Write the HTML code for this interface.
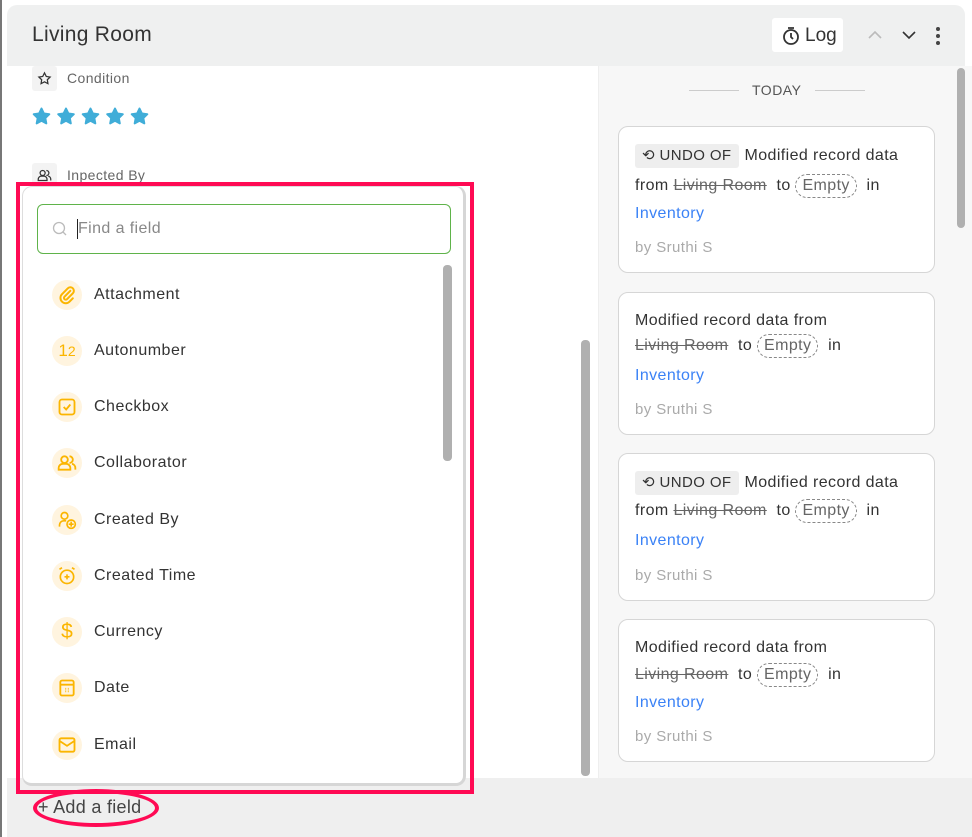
<!DOCTYPE html><html><head><meta charset="utf-8"><style>
*{margin:0;padding:0;box-sizing:border-box}
body{width:972px;height:837px;overflow:hidden;background:#fff;font-family:"Liberation Sans",sans-serif;position:relative;color:#333}
.a{position:absolute}
.t{font-size:16px;white-space:nowrap}
.item{position:absolute;left:52px;height:30px;display:flex;align-items:center}
.ic{width:30px;height:30px;border-radius:50%;background:#fff4df;display:flex;align-items:center;justify-content:center;margin-right:12px}
.item span{font-size:16px;color:#333;letter-spacing:0.5px}
.card{position:absolute;left:618px;width:317px;background:#fff;border:1px solid #d6d6d6;border-radius:10px}
.card .l{position:absolute;left:16px;font-size:16px;color:#333;white-space:nowrap;letter-spacing:0.4px}
s{color:#666;text-decoration:line-through}
.emp{display:inline-block;border:1px dashed #888;border-radius:12px;padding:0 6px;line-height:22px;color:#666}
.undo{display:inline-block;background:#eeeeee;border-radius:3px;padding:0 7px;line-height:24px;font-size:15px;margin-right:6px}
.card .inv{color:#3b82f6}
.card .by{color:#aaa;font-size:15px}
</style></head><body>
<div class="a" style="left:0;top:0;width:2px;height:837px;background:#777"></div>
<!-- header -->
<div class="a" style="left:7px;top:5px;width:958px;height:61px;background:#eff0f0;border-top-left-radius:10px;border-top-right-radius:10px"></div>
<div class="a" style="left:32px;top:23px;font-size:21px;color:#333;letter-spacing:0.3px">Living Room</div>
<div class="a" style="left:772px;top:18px;width:71px;height:34px;background:#fff;border-radius:3px"></div>
<svg class="a" style="left:781px;top:26px" width="20" height="20" viewBox="0 0 20 20" fill="none" stroke="#333" stroke-width="1.8"><circle cx="10" cy="11" r="7"/><path d="M10 7v4l2 2M7 2h6"/></svg>
<div class="a t" style="left:805px;top:25px;font-size:19px">Log</div>
<svg class="a" style="left:867px;top:29px" width="16" height="12"><path d="M2 9l6-6 6 6" fill="none" stroke="#bbb" stroke-width="1.6"/></svg>
<svg class="a" style="left:901px;top:29px" width="16" height="12"><path d="M2 3l6 6 6-6" fill="none" stroke="#333" stroke-width="1.6"/></svg>
<div class="a" style="left:936px;top:27px;width:4px;height:4px;border-radius:2px;background:#444;box-shadow:0 7px 0 #444,0 14px 0 #444"></div>
<!-- right panel -->
<div class="a" style="left:598px;top:66px;width:374px;height:712px;background:#f7f7f7;border-left:1px solid #eee"></div>
<div class="a" style="left:957px;top:68px;width:8px;height:160px;border-radius:4px;background:#b0b0b0"></div>
<div class="a" style="left:689px;top:90px;width:50px;height:1px;background:#ccc"></div>
<div class="a" style="left:815px;top:90px;width:50px;height:1px;background:#ccc"></div>
<div class="a" style="left:752px;top:82px;font-size:14px;color:#555;letter-spacing:0.5px">TODAY</div>

<div class="card" style="top:126px;height:147px">
<div class="l" style="top:17px"><span class="undo">⟲ UNDO OF</span>Modified record data</div>
<div class="l" style="top:47px">from <s>Living Room</s> &nbsp;to <span class="emp">Empty</span> &nbsp;in</div>
<div class="l inv" style="top:78px">Inventory</div>
<div class="l by" style="top:112px">by Sruthi S</div></div>
<div class="card" style="top:292px;height:143px">
<div class="l" style="top:19px">Modified record data from</div>
<div class="l" style="top:41px"><s>Living Room</s> &nbsp;to <span class="emp">Empty</span> &nbsp;in</div>
<div class="l inv" style="top:74px">Inventory</div>
<div class="l by" style="top:108px">by Sruthi S</div></div>
<div class="card" style="top:453px;height:148px">
<div class="l" style="top:17px"><span class="undo">⟲ UNDO OF</span>Modified record data</div>
<div class="l" style="top:45px">from <s>Living Room</s> &nbsp;to <span class="emp">Empty</span> &nbsp;in</div>
<div class="l inv" style="top:78px">Inventory</div>
<div class="l by" style="top:113px">by Sruthi S</div></div>
<div class="card" style="top:619px;height:143px">
<div class="l" style="top:19px">Modified record data from</div>
<div class="l" style="top:43px"><s>Living Room</s> &nbsp;to <span class="emp">Empty</span> &nbsp;in</div>
<div class="l inv" style="top:74px">Inventory</div>
<div class="l by" style="top:108px">by Sruthi S</div></div>

<!-- left content -->
<div class="a" style="left:32px;top:66px;width:25px;height:25px;background:#f3f3f3;border-radius:3px"></div>
<svg class="a" style="left:37px;top:71px" width="15" height="15" viewBox="0 0 24 24"><path d="M12 3l2.8 5.7 6.2.9-4.5 4.4 1 6.2L12 17.3 6.5 20.2l1-6.2L3 9.6l6.2-.9z" fill="none" stroke="#333" stroke-width="2"/></svg>
<div class="a t" style="left:67px;top:70px;font-size:14px;color:#666;letter-spacing:0.4px">Condition</div>
<svg class="a" style="left:32px;top:107px" width="120" height="20" viewBox="0 0 120 20">
<g fill="#40add8" stroke="#40add8" stroke-width="2" stroke-linejoin="round">
<path id="st" d="M9.5 1.5l2.4 5 5.4.7-4 3.8 1 5.4-4.8-2.6-4.8 2.6 1-5.4-4-3.8 5.4-.7z"/>
<use href="#st" x="24.5"/><use href="#st" x="49"/><use href="#st" x="73.5"/><use href="#st" x="98"/></g></svg>
<div class="a" style="left:32px;top:163px;width:25px;height:25px;background:#f3f3f3;border-radius:3px"></div>
<svg class="a" style="left:37px;top:168px" width="15" height="15" viewBox="0 0 24 24" fill="none" stroke="#333" stroke-width="2"><circle cx="9" cy="8" r="4"/><path d="M2 20v-2a5 5 0 015-5h4a5 5 0 015 5v2zM15 4a4 4 0 010 8M18 13a5 5 0 014 5v2"/></svg>
<div class="a t" style="left:67px;top:167px;font-size:14px;color:#666;letter-spacing:0.4px">Inpected By</div>
<div class="a" style="left:581px;top:340px;width:9px;height:436px;border-radius:4px;background:#b0b0b0"></div>
<!-- footer -->
<div class="a" style="left:7px;top:778px;width:965px;height:59px;background:#efefef"></div>
<div class="a t" style="left:38px;top:797px;font-size:18px;color:#444;letter-spacing:0.3px">+ Add a field</div>
<div class="a" style="left:33px;top:789px;width:126px;height:38px;border:4px solid #ff0a54;border-radius:50%"></div>
<!-- dropdown -->
<div class="a" style="left:16px;top:182px;width:458px;height:612px;border:4px solid #ff0a54"></div>
<div class="a" style="left:22px;top:186px;width:444px;height:600px;background:#fff;border:1px solid #ddd;border-right:3px solid #d6d6d6;border-bottom:3px solid #d6d6d6;border-radius:10px"></div>
<div class="a" style="left:37px;top:204px;width:414px;height:50px;border:1px solid #5fb34a;border-radius:6px"></div>
<svg class="a" style="left:52px;top:221px" width="16" height="16"><circle cx="7" cy="7" r="5.5" fill="none" stroke="#bbb" stroke-width="1.3"/><path d="M11 11l3 3" stroke="#bbb" stroke-width="1.3"/></svg>
<div class="a" style="left:77px;top:219px;width:1px;height:20px;background:#222"></div>
<div class="a t" style="left:78px;top:220px;color:#888;letter-spacing:0.4px">Find a field</div>
<div class="a" style="left:443px;top:265px;width:9px;height:196px;border-radius:4px;background:#b0b0b0"></div>

<div class="item" style="top:280px"><div class="ic"><svg width="20" height="20" viewBox="0 0 24 24" fill="none" stroke="#fbb500" stroke-width="2.4" stroke-linecap="round"><path d="M16 7l-7 7a2 2 0 003 3l7-7a4 4 0 00-6-6l-7 7a6 6 0 009 9l4-4"/></svg></div><span>Attachment</span></div>
<div class="item" style="top:336px"><div class="ic" style="color:#fbb500;font-size:17px">1<span style="font-size:14px;color:#fbb500;letter-spacing:0">2</span></div><span>Autonumber</span></div>
<div class="item" style="top:392px"><div class="ic"><svg width="20" height="20" viewBox="0 0 24 24" fill="none" stroke="#fbb500" stroke-width="2.2"><rect x="3" y="3" width="18" height="18" rx="3"/><path d="M8 12l3 3 5-6"/></svg></div><span>Checkbox</span></div>
<div class="item" style="top:448px"><div class="ic"><svg width="20" height="20" viewBox="0 0 24 24" fill="none" stroke="#fbb500" stroke-width="2.2"><circle cx="9" cy="8" r="4"/><path d="M2 20v-2a5 5 0 015-5h4a5 5 0 015 5v2zM15 4a4 4 0 010 8M18 13a5 5 0 014 5v2"/></svg></div><span>Collaborator</span></div>
<div class="item" style="top:505px"><div class="ic"><svg width="20" height="20" viewBox="0 0 24 24" fill="none" stroke="#fbb500" stroke-width="2"><circle cx="9" cy="7" r="4"/><path d="M3 20v-2a5 5 0 015-5h3"/><circle cx="17" cy="17" r="5"/><path d="M17 14v6M14 17h6"/></svg></div><span>Created By</span></div>
<div class="item" style="top:561px"><div class="ic"><svg width="20" height="20" viewBox="0 0 24 24" fill="none" stroke="#fbb500" stroke-width="2"><circle cx="12" cy="13" r="8"/><path d="M12 10v6M9 13h6M3 4l3-2M21 4l-3-2"/></svg></div><span>Created Time</span></div>
<div class="item" style="top:617px"><div class="ic" style="color:#fbb500;font-size:21px">$</div><span>Currency</span></div>
<div class="item" style="top:673px"><div class="ic"><svg width="20" height="20" viewBox="0 0 24 24" fill="none" stroke="#fbb500" stroke-width="2.2"><rect x="4" y="3" width="16" height="18" rx="2"/><path d="M4 8h16M10 13h1M13 13h1M10 16h1M13 16h1"/></svg></div><span>Date</span></div>
<div class="item" style="top:730px"><div class="ic"><svg width="20" height="20" viewBox="0 0 24 24" fill="none" stroke="#fbb500" stroke-width="2.2"><rect x="3" y="4" width="18" height="16" rx="2"/><path d="M3 7l9 6 9-6"/></svg></div><span>Email</span></div>
</body></html>
